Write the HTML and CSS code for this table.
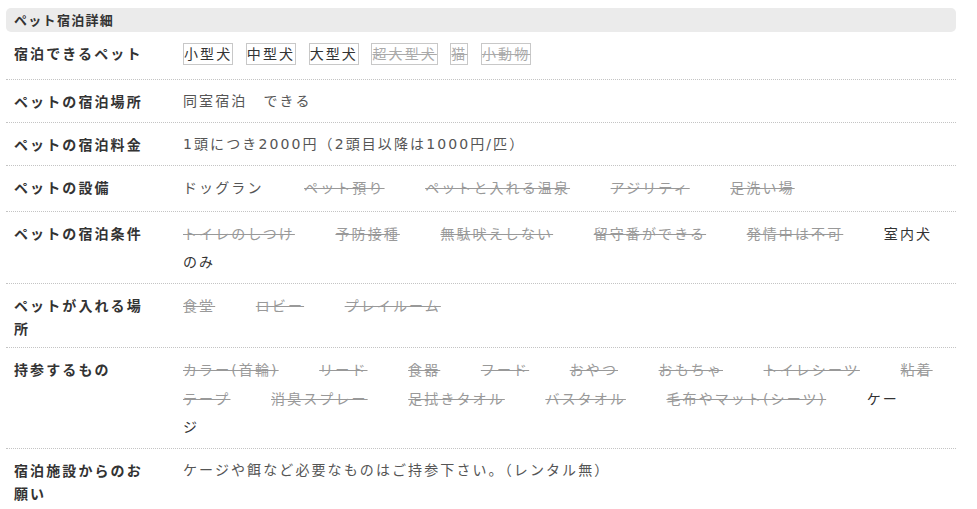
FILE: index.html
```html
<!DOCTYPE html>
<html lang="ja">
<head>
<meta charset="utf-8">
<title>ペット宿泊詳細</title>
<link rel="stylesheet" href="styles.css">
</head>
<body>
<section class="detail">
  <h2 class="detail-title">ペット宿泊詳細</h2>
  <dl class="rows">
    <div class="row">
      <dt class="label">宿泊できるペット</dt>
      <dd class="value">
        <ul class="tags">
          <li class="tag">小型犬</li>
          <li class="tag">中型犬</li>
          <li class="tag">大型犬</li>
          <li class="tag off">超大型犬</li>
          <li class="tag off">猫</li>
          <li class="tag off">小動物</li>
        </ul>
      </dd>
    </div>
    <div class="row">
      <dt class="label">ペットの宿泊場所</dt>
      <dd class="value">同室宿泊　できる</dd>
    </div>
    <div class="row">
      <dt class="label">ペットの宿泊料金</dt>
      <dd class="value">1頭につき2000円（2頭目以降は1000円/匹）</dd>
    </div>
    <div class="row">
      <dt class="label">ペットの設備</dt>
      <dd class="value">
        <span class="item">ドッグラン</span>
        <span class="item off">ペット預り</span>
        <span class="item off">ペットと入れる温泉</span>
        <span class="item off">アジリティ</span>
        <span class="item off">足洗い場</span>
      </dd>
    </div>
    <div class="row">
      <dt class="label">ペットの宿泊条件</dt>
      <dd class="value">
        <span class="item off">トイレのしつけ</span>
        <span class="item off">予防接種</span>
        <span class="item off">無駄吠えしない</span>
        <span class="item off">留守番ができる</span>
        <span class="item off">発情中は不可</span>
        <span class="item on">室内犬のみ</span>
      </dd>
    </div>
    <div class="row">
      <dt class="label">ペットが入れる場所</dt>
      <dd class="value">
        <span class="item off">食堂</span>
        <span class="item off">ロビー</span>
        <span class="item off">プレイルーム</span>
      </dd>
    </div>
    <div class="row">
      <dt class="label">持参するもの</dt>
      <dd class="value">
        <span class="item off">カラー(首輪)</span>
        <span class="item off">リード</span>
        <span class="item off">食器</span>
        <span class="item off">フード</span>
        <span class="item off">おやつ</span>
        <span class="item off">おもちゃ</span>
        <span class="item off">トイレシーツ</span>
        <span class="item off">粘着テープ</span>
        <span class="item off">消臭スプレー</span>
        <span class="item off">足拭きタオル</span>
        <span class="item off">バスタオル</span>
        <span class="item off">毛布やマット(シーツ)</span>
        <span class="item on">ケージ</span>
      </dd>
    </div>
    <div class="row">
      <dt class="label">宿泊施設からのお願い</dt>
      <dd class="value">ケージや餌など必要なものはご持参下さい。（レンタル無）</dd>
    </div>
  </dl>
</section>
</body>
</html>
```
FILE: styles.css
```css
html, body {
  margin: 0;
  padding: 0;
  background: #fff;
}

body {
  font-family: "Noto Sans CJK JP", "Noto Sans", sans-serif;
  color: #333;
  font-size: 14px;
}

.detail {
  padding: 8px 21px 0 6px;
}

.detail-title {
  margin: 0;
  height: 24px;
  line-height: 24px;
  padding-left: 8px;
  background: #ebebeb;
  border-radius: 5px;
  font-size: 13px;
  font-weight: bold;
  letter-spacing: 0.1em;
  color: #333;
}

.rows {
  margin: 0;
}

.row {
  display: grid;
  grid-template-columns: 140px 1fr;
  column-gap: 29px;
  padding: 8px 14px 8px 8px;
  border-bottom: 1px dotted #c4c4c4;
}

.label {
  margin: 0;
  padding-top: 2px;
  font-weight: bold;
  font-size: 14px;
  line-height: 22.5px;
  letter-spacing: 0.15em;
  color: #333;
}

.value {
  margin: 0;
  font-family: "DejaVu Sans", "Noto Sans CJK JP", sans-serif;
  font-size: 14px;
  line-height: 26px;
  letter-spacing: 0.15em;
  color: #555;
}

.tags {
  display: flex;
  flex-wrap: wrap;
  gap: 0 12.5px;
  margin: 0;
  padding: 3px 0 6px;
  list-style: none;
}

.tag {
  border: 1px solid #c8c8c8;
  line-height: 20px;
  color: #333;
}

.tag.off {
  color: #aaa;
  text-decoration: line-through;
}

.item {
  margin-right: 34px;
}

.item.on {
  color: #333;
}

.item.off {
  color: #999;
  text-decoration: line-through;
  line-height: 29px;
}
```
